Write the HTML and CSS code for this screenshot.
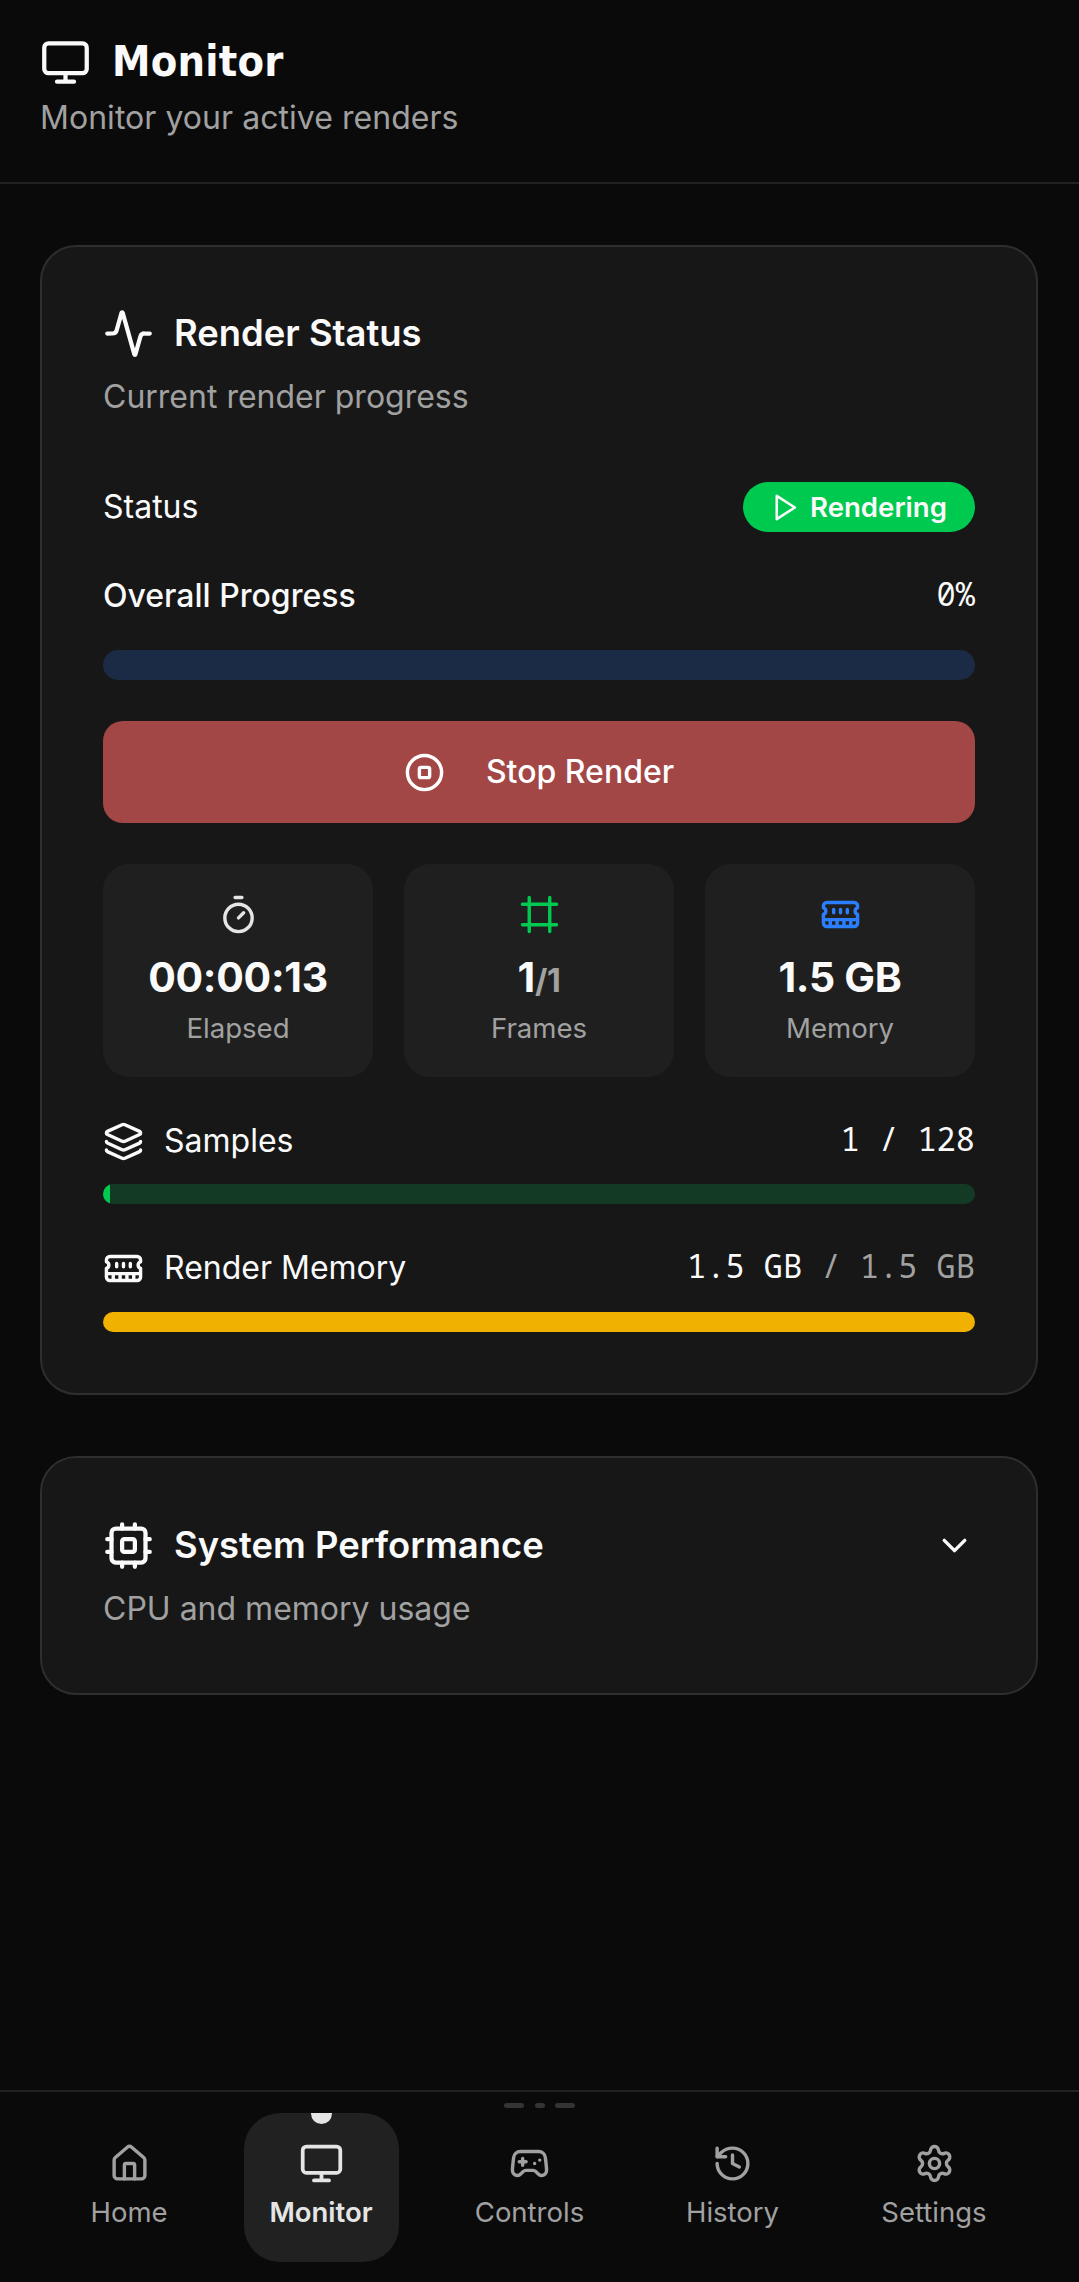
FILE: index.html
```html
<!DOCTYPE html>
<html lang="en">
<head>
<meta charset="utf-8">
<title>Monitor</title>
<link rel="stylesheet" href="styles.css">
</head>
<body>
<svg width="0" height="0" class="sprite" aria-hidden="true">
  <symbol id="monitor" viewBox="0 0 24 24"><rect x="2" y="3" width="20" height="14" rx="2"/><path d="M8 21h8M12 17v4"/></symbol>
  <symbol id="activity" viewBox="0 0 24 24"><path d="M22 12h-2.48a2 2 0 0 0-1.93 1.46l-2.35 8.36a.25.25 0 0 1-.48 0L9.24 2.18a.25.25 0 0 0-.48 0l-2.35 8.36A2 2 0 0 1 4.49 12H2"/></symbol>
  <symbol id="play" viewBox="0 0 24 24"><path d="M6 3l14 9-14 9z"/></symbol>
  <symbol id="stop" viewBox="0 0 24 24"><circle cx="12" cy="12" r="10"/><rect x="9" y="9" width="6" height="6" rx="1"/></symbol>
  <symbol id="timer" viewBox="0 0 24 24"><path d="M10 2h4M12 14l3-3"/><circle cx="12" cy="14" r="8"/></symbol>
  <symbol id="frame" viewBox="0 0 24 24"><path d="M22 6H2M22 18H2M6 2v20M18 2v20"/></symbol>
  <symbol id="memory" viewBox="0 0 24 24"><path d="M6 19v-3M10 19v-3M14 19v-3M18 19v-3M8 11V9M16 11V9M12 11V9M2 15h20M2 7a2 2 0 0 1 2-2h16a2 2 0 0 1 2 2v1.1a2 2 0 0 0 0 3.837V17a2 2 0 0 1-2 2H4a2 2 0 0 1-2-2v-5.1a2 2 0 0 0 0-3.837Z"/></symbol>
  <symbol id="layers" viewBox="0 0 24 24"><path d="M12.83 2.18a2 2 0 0 0-1.66 0L2.6 6.08a1 1 0 0 0 0 1.83l8.58 3.91a2 2 0 0 0 1.66 0l8.58-3.9a1 1 0 0 0 0-1.83z"/><path d="M2 12a1 1 0 0 0 .58.91l8.6 3.91a2 2 0 0 0 1.65 0l8.58-3.9A1 1 0 0 0 22 12"/><path d="M2 17a1 1 0 0 0 .58.91l8.6 3.91a2 2 0 0 0 1.65 0l8.58-3.9A1 1 0 0 0 22 17"/></symbol>
  <symbol id="cpu" viewBox="0 0 24 24"><rect x="4" y="4" width="16" height="16" rx="2"/><rect x="9" y="9" width="6" height="6" rx="1"/><path d="M15 2v2M15 20v2M2 15h2M2 9h2M20 15h2M20 9h2M9 2v2M9 20v2"/></symbol>
  <symbol id="chevron" viewBox="0 0 24 24"><path d="M6 9l6 6 6-6"/></symbol>
  <symbol id="home" viewBox="0 0 24 24"><path d="M15 21v-8a1 1 0 0 0-1-1h-4a1 1 0 0 0-1 1v8"/><path d="M3 10a2 2 0 0 1 .709-1.528l7-5.999a2 2 0 0 1 2.582 0l7 5.999A2 2 0 0 1 21 10v9a2 2 0 0 1-2 2H5a2 2 0 0 1-2-2z"/></symbol>
  <symbol id="gamepad" viewBox="0 0 24 24"><path d="M6 11h4M8 9v4M15 12h.01M18 10h.01"/><path d="M17.32 5H6.68a4 4 0 0 0-3.978 3.59c-.006.052-.01.101-.017.152C2.604 9.416 2 14.456 2 16a3 3 0 0 0 3 3c1 0 1.500-.500 2-1l1.414-1.414A2 2 0 0 1 9.828 16h4.344a2 2 0 0 1 1.414.586L17 18c.5.5 1 1 2 1a3 3 0 0 0 3-3c0-1.545-.604-6.584-.685-7.258-.007-.05-.011-.1-.017-.151A4 4 0 0 0 17.320 5z"/></symbol>
  <symbol id="history" viewBox="0 0 24 24"><path d="M3 12a9 9 0 1 0 9-9 9.750 9.750 0 0 0-6.740 2.740L3 8"/><path d="M3 3v5h5M12 7v5l4 2"/></symbol>
  <symbol id="settings" viewBox="0 0 24 24"><path d="M9.671 4.136a2.340 2.340 0 0 1 4.659 0 2.340 2.340 0 0 0 3.319 1.915 2.340 2.340 0 0 1 2.330 4.033 2.340 2.340 0 0 0 0 3.831 2.340 2.340 0 0 1-2.330 4.033 2.340 2.340 0 0 0-3.319 1.915 2.340 2.340 0 0 1-4.659 0 2.340 2.340 0 0 0-3.320-1.915 2.340 2.340 0 0 1-2.330-4.033 2.340 2.340 0 0 0 0-3.831A2.340 2.340 0 0 1 6.350 6.051a2.340 2.340 0 0 0 3.319-1.915"/><circle cx="12" cy="12" r="3"/></symbol>
</svg>

<header class="page-header">
  <h1 class="page-title"><svg class="icon icon-lg"><use href="#monitor"/></svg><span>Monitor</span></h1>
  <p class="page-subtitle">Monitor your active renders</p>
</header>

<main class="content">
  <section class="card">
    <h2 class="card-title"><svg class="icon icon-lg"><use href="#activity"/></svg><span>Render Status</span></h2>
    <p class="card-description">Current render progress</p>

    <div class="row status-row">
      <span>Status</span>
      <span class="badge"><svg class="icon icon-sm"><use href="#play"/></svg>Rendering</span>
    </div>

    <div class="row progress-row">
      <span class="medium">Overall Progress</span>
      <span class="mono">0%</span>
    </div>
    <div class="bar bar-overall"></div>

    <button class="stop-button"><svg class="icon"><use href="#stop"/></svg>Stop Render</button>

    <div class="tiles">
      <div class="tile">
        <svg class="icon tile-timer"><use href="#timer"/></svg>
        <div class="tile-value">00:00:13</div>
        <div class="tile-label">Elapsed</div>
      </div>
      <div class="tile">
        <svg class="icon tile-frames"><use href="#frame"/></svg>
        <div class="tile-value">1<span class="tile-total">/1</span></div>
        <div class="tile-label">Frames</div>
      </div>
      <div class="tile">
        <svg class="icon tile-memory"><use href="#memory"/></svg>
        <div class="tile-value">1.5 GB</div>
        <div class="tile-label">Memory</div>
      </div>
    </div>

    <div class="row metric-row">
      <span class="metric-name"><svg class="icon"><use href="#layers"/></svg>Samples</span>
      <span class="mono">1 / 128</span>
    </div>
    <div class="bar bar-samples"><div class="bar-fill" style="width:0.78%"></div></div>

    <div class="row metric-row">
      <span class="metric-name"><svg class="icon"><use href="#memory"/></svg>Render Memory</span>
      <span class="mono">1.5 GB <span class="muted">/ 1.5 GB</span></span>
    </div>
    <div class="bar bar-memory"><div class="bar-fill" style="width:100%"></div></div>
  </section>

  <section class="card card-performance">
    <div class="row">
      <h2 class="card-title"><svg class="icon icon-lg"><use href="#cpu"/></svg><span>System Performance</span></h2>
      <svg class="icon"><use href="#chevron"/></svg>
    </div>
    <p class="card-description">CPU and memory usage</p>
  </section>
</main>

<nav class="bottom-nav">
  <div class="handle"><i class="handle-long"></i><i class="handle-short"></i><i class="handle-long"></i></div>
  <div class="nav-items">
    <a class="nav-item nav-home"><svg class="icon"><use href="#home"/></svg>Home</a>
    <a class="nav-item nav-active"><svg class="icon"><use href="#monitor"/></svg>Monitor</a>
    <a class="nav-item nav-controls"><svg class="icon"><use href="#gamepad"/></svg>Controls</a>
    <a class="nav-item nav-history"><svg class="icon"><use href="#history"/></svg>History</a>
    <a class="nav-item nav-settings"><svg class="icon"><use href="#settings"/></svg>Settings</a>
  </div>
</nav>
</body>
</html>
```
FILE: styles.css
```css
* { box-sizing: border-box; margin: 0; padding: 0; }

body {
  display: flex;
  flex-direction: column;
  height: 2282px;
  background: #0a0a0a;
  color: #fafafa;
  font: 400 32px/46px Inter, "Liberation Sans", sans-serif;
}

.sprite { position: absolute; }

.icon {
  flex: none;
  width: 41px;
  height: 41px;
  fill: none;
  stroke: currentColor;
  stroke-width: 2;
  stroke-linecap: round;
  stroke-linejoin: round;
}
.icon-lg { width: 51px; height: 51px; }
.icon-sm { width: 31px; height: 31px; }

.muted, .page-subtitle, .card-description { color: #a1a1a1; }
.medium { font-weight: 500; }

/* Header */
.page-header {
  height: 184px;
  padding: 36px 40px 0;
  border-bottom: 2px solid #222;
}
.page-title {
  display: flex;
  align-items: center;
  gap: 21px;
  height: 52px;
  font: 700 43px/52px "DejaVu Sans Condensed", "DejaVu Sans", sans-serif;
  letter-spacing: 0.2px;
}
.page-title span { padding-bottom: 3px; }
.page-subtitle { margin-top: 7px; letter-spacing: 0.04px; }

/* Cards */
.content {
  display: flex;
  flex-direction: column;
  flex: 1;
  gap: 61px;
  padding: 61px 41px 0 40px;
}
.card {
  height: 1150px;
  padding: 61px;
  border: 2px solid #2e2e2e;
  border-radius: 36px;
  background: #171717;
}
.card-performance { height: 239px; padding-top: 62px; }
.card-title {
  display: flex;
  align-items: center;
  gap: 20px;
  height: 51px;
  font-size: 36.4px;
  font-weight: 600;
}
.card-title span { padding-bottom: 2px; }
.card-description { margin-top: 15px; }

.row {
  display: flex;
  align-items: center;
  justify-content: space-between;
}
.status-row { height: 50px; margin-top: 62px; line-height: 48px; }
.progress-row { height: 46px; margin-top: 41px; }
.mono {
  padding-bottom: 5px;
  font-family: "Noto Sans Mono", "DejaVu Sans Mono", monospace;
}

.badge {
  display: flex;
  align-items: center;
  gap: 10px;
  width: 232px;
  height: 50px;
  padding-left: 26px;
  border-radius: 25px;
  background: #00c950;
  font-size: 27.6px;
  font-weight: 600;
  line-height: 50px;
}

/* Progress bars */
.bar { overflow: hidden; height: 20px; border-radius: 10px; }
.bar-fill { height: 100%; }
.bar-overall { height: 30px; margin-top: 31px; border-radius: 15px; background: #1c2b45; }
.bar-samples { margin-top: 20px; background: #123a24; }
.bar-samples .bar-fill { background: #00c950; }
.bar-memory { margin-top: 21px; background: #433208; }
.bar-memory .bar-fill { background: #f0b100; }

.stop-button {
  display: flex;
  align-items: center;
  justify-content: center;
  gap: 41px;
  width: 100%;
  height: 102px;
  margin-top: 41px;
  border: 0;
  border-radius: 20px;
  background: #a34646;
  color: #fff;
  font: 500 32px/46px Inter, "Liberation Sans", sans-serif;
}

/* Stat tiles */
.tiles {
  display: grid;
  grid-template-columns: repeat(3, 1fr);
  gap: 31px;
  margin-top: 41px;
}
.tile {
  display: flex;
  flex-direction: column;
  align-items: center;
  height: 213px;
  padding-top: 30px;
  border-radius: 26px;
  background: #1f1f1f;
}
.tile-timer { color: #e5e5e5; }
.tile-frames { color: #00c950; }
.tile-memory { color: #2b7fff; }
.tile-value {
  margin-top: 14px;
  font-size: 41px;
  font-weight: 700;
  line-height: 56px;
  letter-spacing: -0.3px;
}
.tile-total { color: #a1a1a1; font-size: 32px; line-height: 1; }
.tile-label {
  margin-top: 4px;
  color: #a1a1a1;
  font-size: 27.6px;
  line-height: 38px;
}

.metric-row { height: 46px; margin-top: 41px; }
.metric-name { display: flex; align-items: center; gap: 20px; }

/* Bottom navigation */
.bottom-nav {
  height: 192px;
  padding-top: 11px;
  border-top: 2px solid #222;
}
.handle { display: flex; justify-content: center; gap: 10.5px; height: 5px; }
.handle i { height: 5px; border-radius: 3px; background: #343434; }
.handle-long { width: 20px; }
.handle-short { width: 10px; }
.nav-items {
  display: flex;
  justify-content: space-between;
  margin-top: 5px;
  padding: 0 66px 0 65px;
}
.nav-item {
  display: flex;
  flex-direction: column;
  align-items: center;
  gap: 9px;
  height: 149px;
  padding-top: 30px;
  color: #a1a1a1;
  font-size: 27.5px;
  line-height: 38px;
}
.nav-home { width: 128px; }
.nav-controls { width: 161px; }
.nav-history { width: 144px; }
.nav-settings { width: 158px; }
.nav-active {
  position: relative;
  overflow: hidden;
  width: 155px;
  border-radius: 36px;
  background: #212121;
  color: #e5e5e5;
  font-weight: 600;
}
.nav-active .icon { transform: scale(1.1); }
.nav-active::before {
  content: "";
  position: absolute;
  top: -10.5px;
  left: 67px;
  width: 21px;
  height: 21px;
  border-radius: 50%;
  background: #e5e5e5;
}
```
